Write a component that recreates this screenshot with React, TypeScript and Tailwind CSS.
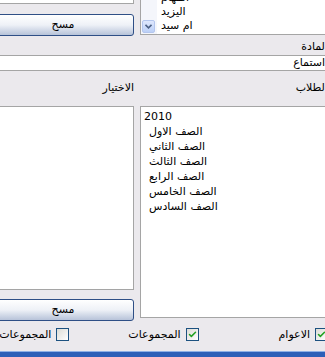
import { Check } from 'lucide-react';

const font = { fontFamily: '"DejaVu Sans", Tahoma, sans-serif' };

function XpButton({ label }: { label: string }) {
    return (
        <button className="h-[22px] w-full rounded-[3px] border border-[#2f4f86] bg-gradient-to-b from-white via-[#eef1f7] to-[#b7c3d9] text-[11px] text-black">
            {label}
        </button>
    );
}

function CheckBox({ label, checked }: { label: string; checked: boolean }) {
    return (
        <div className="flex items-center gap-[5px]">
            <span className="flex h-[13px] w-[13px] items-center justify-center border border-[#1c5180] bg-gradient-to-br from-[#dcdcd6] to-white">
                {checked && <Check className="h-[9px] w-[9px] text-[#21a121]" strokeWidth={4} />}
            </span>
            <span className="text-[11px] leading-none text-black">{label}</span>
        </div>
    );
}

export default function App() {
    return (
        <div className="relative h-[357px] w-[325px] overflow-hidden bg-[#ebe9ed]" style={font}>
            <div className="ml-[-8px] flex w-[341px] flex-col">
                {/* top row: remaining textbox + button / list */}
                <div className="flex h-[36px] gap-[6px]">
                    <div className="flex w-[142px] flex-col">
                        <div className="h-[7px] border-x border-b border-[#a5a5a5] bg-white" />
                        <div className="mt-[7px]">
                            <XpButton label="مسح" />
                        </div>
                    </div>
                    <div className="flex h-[35px] flex-1 overflow-hidden border-x border-b border-[#a5a5a5] bg-white">
                        <div className="flex w-[16px] flex-col justify-end bg-[#f4f6fb] pb-[1px] pl-[1px]">
                            <div className="flex h-[13px] w-[13px] items-center justify-center rounded-[2px] border border-[#b4c6ee] bg-gradient-to-b from-[#dfe8fd] to-[#bcd0f7]">
                                <svg width="7" height="5" viewBox="0 0 7 5">
                                    <path d="M0.5 0.8 L3.5 3.8 L6.5 0.8" fill="none" stroke="#4d6185" strokeWidth="1.6" />
                                </svg>
                            </div>
                        </div>
                        <div className="mt-[-9px] flex flex-col pl-[4px] text-[11px] leading-[14px] text-black">
                            <span>المهام</span>
                            <span>اليزيد</span>
                            <span>ام سيد</span>
                        </div>
                    </div>
                </div>

                {/* subject */}
                <div className="flex h-[19px] items-center pr-[5px] pt-[3px] text-[11px] text-black" dir="rtl">
                    <span>المادة</span>
                </div>
                <div className="flex h-[16px] items-center border-y border-[#a5a5a5] bg-white pr-[8px] text-[11px] text-black" dir="rtl">
                    استماع
                </div>

                {/* labels */}
                <div className="flex h-[35px] items-center gap-[6px] text-[11px] text-black">
                    <div className="w-[142px] text-right">الاختيار</div>
                    <div className="flex-1 pr-[5px] text-right">الطلاب</div>
                </div>

                {/* lists */}
                <div className="flex gap-[6px]">
                    <div className="flex w-[142px] flex-col">
                        <div className="h-[184px] border border-[#a5a5a5] bg-white" />
                        <div className="mt-[6px]">
                            <XpButton label="مسح" />
                        </div>
                    </div>
                    <div className="h-[212px] flex-1 border border-[#a5a5a5] bg-white px-[3px] pt-[2px] text-[11px] leading-[15px] text-black">
                        <div>2010</div>
                        <div className="flex flex-col items-start pl-[5px]">
                            <span>الصف الاول</span>
                            <span>الصف الثاني</span>
                            <span>الصف الثالث</span>
                            <span>الصف الرابع</span>
                            <span>الصف الخامس</span>
                            <span>الصف السادس</span>
                        </div>
                    </div>
                </div>

                {/* checkboxes */}
                <div className="mt-[7px] flex h-[13px] items-center gap-[80px] pr-[5px]" dir="rtl">
                    <CheckBox label="الاعوام" checked />
                    <CheckBox label="المجموعات" checked />
                    <div className="mr-[-21px]">
                        <CheckBox label="المجموعات" checked={false} />
                    </div>
                </div>
            </div>

            {/* bottom window edge */}
            <div className="absolute bottom-0 left-0 h-[6px] w-full border-t border-[#8fb0e6] bg-[#2d5fb8]" />
        </div>
    );
}
